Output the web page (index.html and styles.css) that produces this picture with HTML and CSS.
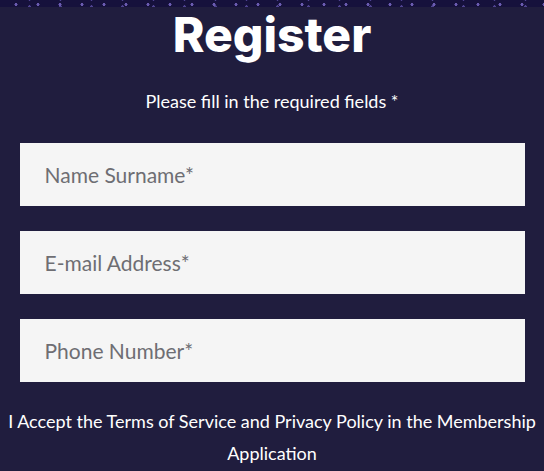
FILE: index.html
```html
<!DOCTYPE html>
<html lang="en">
<head>
<meta charset="utf-8">
<link rel="stylesheet" href="styles.css">
</head>
<body>
<div class="stars"></div>
<main class="register">
  <h1 class="title">Register</h1>
  <p class="subtitle">Please fill in the required fields *</p>
  <form class="form">
    <input class="field" type="text" placeholder="Name Surname*">
    <input class="field" type="email" placeholder="E-mail Address*">
    <input class="field" type="tel" placeholder="Phone Number*">
  </form>
  <p class="terms">I Accept the Terms of Service and Privacy Policy in the Membership Application</p>
</main>
</body>
</html>
```
FILE: styles.css
```css
html, body {
  margin: 0;
  padding: 0;
}
body {
  background: #201d3e;
  width: 544px;
  height: 471px;
  overflow: hidden;
  font-family: "Lato", "Open Sans", sans-serif;
  color: #ffffff;
}
.stars {
  height: 7px;
  background-color: #16113c;
  background-image:
    radial-gradient(circle, #6a5bb0 0 1.3px, transparent 1.8px),
    radial-gradient(circle, #4f4390 0 1px, transparent 1.5px);
  background-size: 22px 7px, 31px 7px;
  background-position: 5px 1px, 14px 3px;
}
.register {
  display: flex;
  flex-direction: column;
  align-items: center;
}
.title {
  margin: 0;
  font-family: "Inter", sans-serif;
  font-weight: 800;
  font-size: 48px;
  line-height: 56px;
}
.subtitle {
  margin: 26px 0 0;
  font-size: 18px;
  line-height: 24px;
}
.form {
  margin-top: 30px;
  display: flex;
  flex-direction: column;
  gap: 25px;
  width: 505px;
}
.field {
  box-sizing: border-box;
  height: 63px;
  border: 0;
  outline: 0;
  background: #f5f5f5;
  padding: 0 25px;
  font-family: "Lato", sans-serif;
  font-size: 21px;
  color: #333;
}
.field::placeholder {
  color: #6e6e73;
}
.terms {
  margin: 23px 0 0;
  width: 540px;
  text-align: center;
  font-size: 18px;
  line-height: 32px;
}
```
